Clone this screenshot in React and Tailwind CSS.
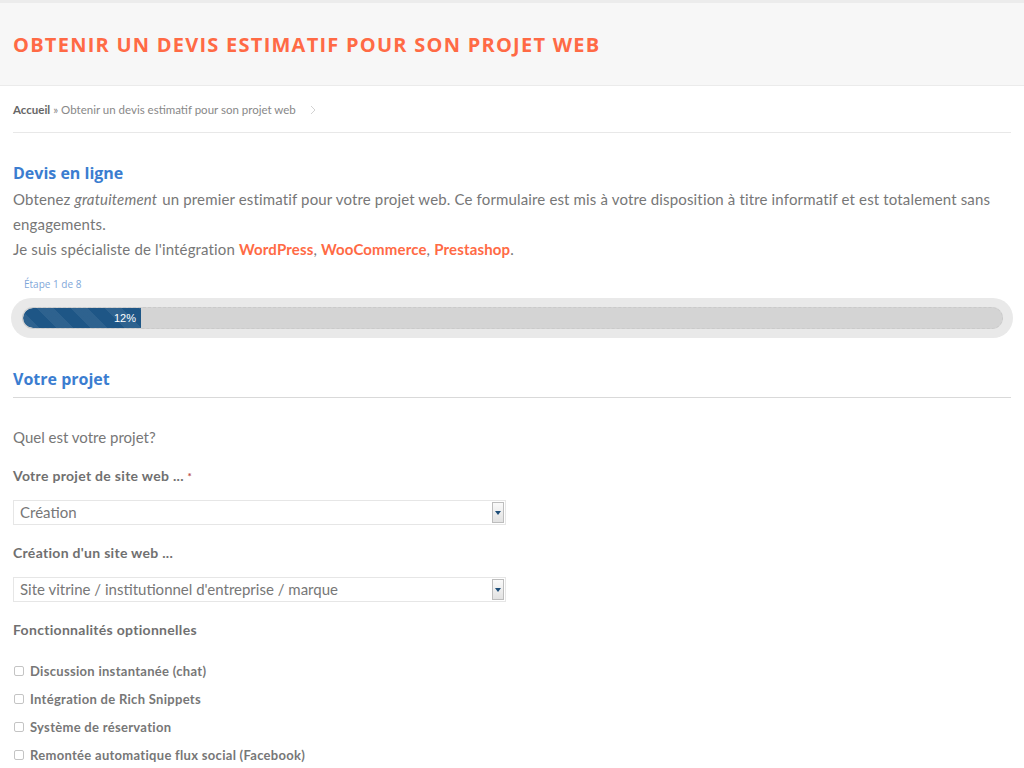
import { useState } from "react";

const options = [
  "Discussion instantanée (chat)",
  "Intégration de Rich Snippets",
  "Système de réservation",
  "Remontée automatique flux social (Facebook)",
];

function SelectBox({ value }) {
  return (
    <div className="w-[493px] h-[25px] border border-[#e6e6e6] bg-white flex items-center justify-between pl-[6px] pr-[1px]">
      <span className="text-[15px] text-[#777]">{value}</span>
      <div className="w-[12px] h-[21px] bg-gradient-to-b from-[#fafafa] to-[#e2e2e2] border border-[#bdbdbd] flex items-center justify-center">
        <svg width="6" height="4" viewBox="0 0 6 4">
          <path d="M0 0h6L3 4z" fill="#1d4d78" />
        </svg>
      </div>
    </div>
  );
}

function App() {
  const [checked, setChecked] = useState({});

  return (
    <div className="min-h-screen bg-white font-['Lato','Open_Sans',sans-serif] text-[#777]">
      {/* Header */}
      <div className="bg-[#f7f7f7] border-t-[3px] border-[#ececec] border-b border-b-[#ebebeb] h-[86px] flex items-center px-[13px]">
        <h1 className="font-['Open_Sans',sans-serif] font-bold text-[20px] tracking-[1.25px] text-[#ff6a45] uppercase pt-[2px]">
          Obtenir un devis estimatif pour son projet web
        </h1>
      </div>

      <div className="px-[13px]">
        {/* Breadcrumb */}
        <div className="h-[47px] border-b border-[#e8e8e8] flex items-center text-[11.5px] pt-[1px]">
          <span className="font-bold text-[#666]">Accueil</span>
          <span className="ml-[3px] text-[#888]">» Obtenir un devis estimatif pour son projet web</span>
          <svg className="ml-[14px]" width="6" height="10" viewBox="0 0 6 10">
            <path d="M1 1l4 4-4 4" fill="none" stroke="#d2d2d2" strokeWidth="1" />
          </svg>
        </div>

        {/* Intro */}
        <h2 className="mt-[30px] font-['Open_Sans',sans-serif] font-bold text-[16px] leading-[20px] text-[#3b7dd0]">
          Devis en ligne
        </h2>
        <p className="mt-[4px] text-[15px] leading-[25px] tracking-[0.15px] text-[#777] pr-[14px]">
          Obtenez <em className="pr-[1px]">gratuitement</em> un premier estimatif pour votre projet web. Ce formulaire est mis à votre disposition à titre informatif et est totalement sans engagements.
          <br />
          Je suis spécialiste de l'intégration{" "}
          <a className="font-bold text-[#ff6a45]" href="#">WordPress</a>,{" "}
          <a className="font-bold text-[#ff6a45]" href="#">WooCommerce</a>,{" "}
          <a className="font-bold text-[#ff6a45]" href="#">Prestashop</a>.
        </p>

        {/* Progress */}
        <div className="mt-[16px] pl-[11px] text-[10px] leading-[12px] text-[#7fa7d9] font-['Open_Sans',sans-serif]">
          Étape 1 de 8
        </div>
        <div className="mt-[8px] -mx-[2px] h-[40px] rounded-full bg-[#e9e9e9] p-[9px] pl-[11px] pr-[10px]">
          <div className="h-[22px] rounded-full bg-[#d4d4d4] border border-[#cacaca] border-dashed overflow-hidden flex">
            <div className="w-[118px] h-full rounded-l-full bg-[#1e5686] bg-[repeating-linear-gradient(45deg,rgba(255,255,255,0.07)_0px,rgba(255,255,255,0.07)_12px,transparent_12px,transparent_24px)] flex items-center justify-end pr-[5px]">
              <span className="text-[11px] text-white font-['Liberation_Sans',sans-serif]">12%</span>
            </div>
          </div>
        </div>

        {/* Section */}
        <h2 className="mt-[31px] font-['Open_Sans',sans-serif] font-bold text-[16px] leading-[20px] text-[#3b7dd0] pb-[8px] border-b border-[#d9d9d9]">
          Votre projet
        </h2>

        <p className="mt-[30px] text-[15px] leading-[18px] text-[#777]">Quel est votre projet?</p>

        <label className="block mt-[21px] text-[14px] leading-[18px] tracking-[0.3px] font-bold text-[#707070]">
          Votre projet de site web ... <span className="text-[#b94a48] text-[10px] align-top">*</span>
        </label>
        <div className="mt-[15px]">
          <SelectBox value="Création" />
        </div>

        <label className="block mt-[19px] text-[14px] leading-[18px] tracking-[0.3px] font-bold text-[#707070]">
          Création d'un site web ...
        </label>
        <div className="mt-[15px]">
          <SelectBox value="Site vitrine / institutionnel d'entreprise / marque" />
        </div>

        <label className="block mt-[19px] text-[14px] leading-[18px] tracking-[0.3px] font-bold text-[#707070]">
          Fonctionnalités optionnelles
        </label>

        <div className="mt-[24px] flex flex-col gap-[12px]">
          {options.map((o) => (
            <label key={o} className="flex items-center gap-[6px] text-[13px] leading-[16px] tracking-[0.3px] font-bold text-[#777]">
              <span
                onClick={() => setChecked({ ...checked, [o]: !checked[o] })}
                className="ml-[1px] w-[10px] h-[10px] border border-[#c4c4c4] rounded-[2px] bg-white"
              />
              {o}
            </label>
          ))}
        </div>
      </div>
    </div>
  );
}

export default App;
